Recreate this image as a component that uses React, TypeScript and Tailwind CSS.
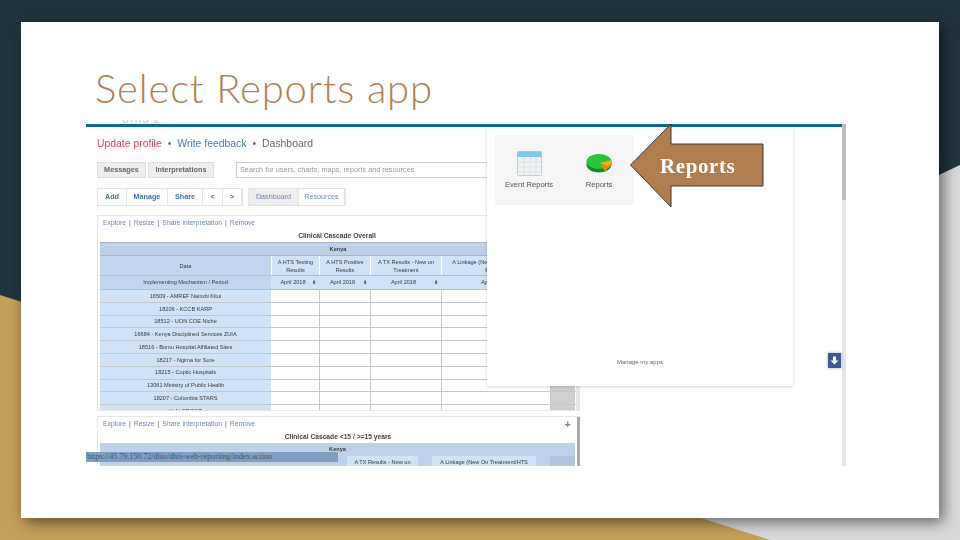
import React from "react";

const rows = [
  "16509 - AMREF Nairobi Kitui",
  "18206 - KCCB KARP",
  "18512 - UON COE Niche",
  "16684 - Kenya Disciplined Services ZUIA",
  "18516 - Bomu Hospital Affiliated Sites",
  "18217 - Ngima for Sure",
  "18215 - Coptic Hospitals",
  "13061 Ministry of Public Health",
  "18207 - Columbia STARS",
  "UoN CRISSP",
];

const cols = "grid grid-cols-[171px_48px_51px_71px_109px_25px]";

function Links() {
  return (
    <div className="h-[14px] flex items-center gap-[3px] pl-[3px] text-[6.8px] text-[#6f86b8]">
      <span>Explore</span><span className="text-[#666]">|</span>
      <span>Resize</span><span className="text-[#666]">|</span>
      <span>Share interpretation</span><span className="text-[#666]">|</span>
      <span>Remove</span>
    </div>
  );
}

function Period() {
  return (
    <div className="flex items-center justify-center relative h-full pr-[4px]">
      <span>April 2018</span>
      <span className="absolute right-[3px] text-[5px] text-[#444]">⬍</span>
    </div>
  );
}

function Tab({ label, w, blue, active }: { label: string; w: string; blue?: boolean; active?: boolean }) {
  return (
    <div className={`h-full flex items-center justify-center border-r border-[#e4e4e4] text-[7.2px] ${w} ${blue ? "font-bold text-[#4a6cb0]" : "text-[#6f86b8]"} ${active ? "bg-[#eeeeee]" : ""}`}>
      {label}
    </div>
  );
}

function CalendarIcon() {
  return (
    <svg width="25" height="25" viewBox="0 0 25 25">
      <rect x="0.5" y="0.5" width="24" height="24" rx="1" fill="#f0f3f4" stroke="#b4d3e8" />
      <rect x="0.5" y="0.5" width="24" height="5.5" fill="#84c4ee" />
      <path d="M1 11h23M1 16h23M1 21h23M7 6v18M13 6v18M19 6v18" stroke="#d6dde1" strokeWidth="0.8" />
    </svg>
  );
}

function PieIcon() {
  return (
    <svg width="26" height="19" viewBox="0 0 26 19">
      <ellipse cx="13" cy="10.5" rx="12.5" ry="8" fill="#138a2c" />
      <ellipse cx="13" cy="7.5" rx="12.5" ry="7.5" fill="#27c43f" />
      <path d="M14 9 L25.5 7 Q26 12 21 15 L19 18 Q17 13 14 9Z" fill="#e88a0c" />
      <path d="M14 9 L25 6.5 Q25.5 9 22 12 Z" fill="#fbb022" />
    </svg>
  );
}

export default function App() {
  return (
    <div className="relative w-[960px] h-[540px] overflow-hidden bg-[#22343f] pl-[21px] pt-[22px] font-['Liberation_Sans',sans-serif]">
      <svg className="absolute inset-0" width="960" height="540" viewBox="0 0 960 540">
        <polygon points="960,165 400,430 400,540 960,540" fill="#d9d9d9" />
        <polygon points="0,295 770,540 0,540" fill="#c5a05a" />
      </svg>

      <div className="relative w-[918px] h-[496px] bg-white shadow-[4px_4px_14px_rgba(0,0,0,0.55)] pl-[65px] pt-[98px]">
        <h1 className="absolute left-[74px] top-[41px] text-[40px] leading-[50px] font-light tracking-[0.85px] text-[#b07f52] font-['Lato',sans-serif]">
          Select Reports app
        </h1>

        {/* embedded screenshot */}
        <div className="relative w-[760px] h-[346px] overflow-hidden blur-[0.35px]">
          <div className="h-[4px] overflow-hidden pl-[36px] text-[10px] leading-[0px] font-bold tracking-[1px] text-[#d4d4d4]">DHIS 2</div>
          <div className="h-[3px] w-[757px] bg-[#0e6a93]" />

          <div className="pl-[11px]">
            <div className="mt-[9px] h-[16px] flex items-center gap-[6px] text-[10.4px] text-[#666]">
              <span className="text-[#e0405a]">Update profile</span>
              <span>•</span>
              <span className="text-[#4a76c0]">Write feedback</span>
              <span>•</span>
              <span>Dashboard</span>
            </div>

            <div className="mt-[10px] h-[16px] flex items-center text-[7.3px]">
              <div className="h-full w-[49px] flex items-center justify-center bg-[#eeeeee] border border-[#dddddd] font-bold text-[#666]">Messages</div>
              <div className="ml-[2px] h-full w-[66px] flex items-center justify-center bg-[#eeeeee] border border-[#dddddd] font-bold text-[#666]">Interpretations</div>
              <div className="ml-[22px] h-full w-[260px] flex items-center pl-[3px] border border-[#cccccc] text-[#999]">Search for users, charts, maps, reports and resources</div>
            </div>

            <div className="mt-[10px] h-[18px] flex">
              <div className="flex border border-[#e4e4e4] h-full">
                <Tab label="Add" w="w-[29px]" blue />
                <Tab label="Manage" w="w-[41px]" blue />
                <Tab label="Share" w="w-[35px]" blue />
                <Tab label="<" w="w-[20px]" blue />
                <Tab label=">" w="w-[19px]" blue />
              </div>
              <div className="ml-[5px] flex border border-[#e4e4e4] h-full">
                <Tab label="Dashboard" w="w-[50px]" active />
                <Tab label="Resources" w="w-[46px]" />
              </div>
            </div>

            {/* panel 1 */}
            <div className="mt-[9px] w-[483px] h-[196px] border border-[#e6e6e6] border-r-[4px] pl-[2px] overflow-hidden">
              <Links />
              <div className="h-[12px] pr-[2px] flex items-center justify-center text-[6.7px] font-bold text-[#444]">Clinical Cascade Overall</div>
              <div className="text-[5.6px] text-[#3a3a3a]">
                <div className="h-[14px] bg-[#bed1e8] border-y border-[#a9b6c6] flex items-center justify-center font-bold">Kenya</div>
                <div className={`${cols} h-[20px] bg-[#d0e2f6] border-b border-[#b5bfca] text-center leading-[8px]`}>
                  <div className="bg-[#c3d5ea] flex items-center justify-center">Data</div>
                  <div className="flex items-center justify-center border-l border-white">A HTS Testing Results</div>
                  <div className="flex items-center justify-center border-l border-white">A HTS Positive Results</div>
                  <div className="flex items-center justify-center border-l border-white">A TX Results - New on Treatment</div>
                  <div className="flex items-center justify-center border-l border-white">A Linkage (New On Treatment/HTS Positive)</div>
                  <div className="bg-[#bed1e8]" />
                </div>
                <div className={`${cols} h-[14px] bg-[#d0e2f6] border-b border-[#b5bfca] text-center`}>
                  <div className="bg-[#c3d5ea] flex items-center justify-center">Implementing Mechanism / Period</div>
                  <Period />
                  <Period />
                  <Period />
                  <Period />
                  <div className="bg-[#bed1e8]" />
                </div>
                {rows.map((r) => (
                  <div key={r} className={`${cols} h-[12.8px] border-b border-[#c4c8cc]`}>
                    <div className="bg-[#d0e2f6] flex items-center justify-center">{r}</div>
                    <div />
                    <div className="border-l border-[#c4c8cc]" />
                    <div className="border-l border-[#c4c8cc]" />
                    <div className="border-l border-[#c4c8cc]" />
                    <div className="bg-[#cfcfcf] border-l border-[#c4c8cc]" />
                  </div>
                ))}
              </div>
            </div>

            {/* panel 2 */}
            <div className="mt-[5px] relative w-[483px] h-[60px] border-l border-t border-[#e6e6e6] pl-[2px] overflow-hidden">
              <Links />
              <div className="h-[12px] pr-[4px] flex items-center justify-center text-[6.7px] font-bold text-[#444]">Clinical Cascade &lt;15 / &gt;=15 years</div>
              <div className="w-[475px] text-[5.6px] text-[#3a3a3a]">
                <div className="h-[13px] bg-[#bed1e8] flex items-center justify-center font-bold">Kenya</div>
                <div className="h-[12px] bg-[#bed1e8] flex pl-[247px]">
                  <div className="w-[71px] bg-[#d0e2f6] text-center leading-[12px]">A TX Results - New on</div>
                  <div className="ml-[14px] w-[104px] bg-[#d0e2f6] text-center leading-[12px]">A Linkage (New On Treatment/HTS</div>
                  <div className="ml-[14px] w-[25px] bg-[#b4c4d8]" />
                </div>
              </div>
              <div className="absolute right-[9px] top-[1px] text-[11px] font-bold leading-[12px] text-[#888]">+</div>
              <div className="absolute right-0 top-0 w-[3px] h-full bg-[#aaaaaa]" />
            </div>
          </div>

          {/* status bar */}
          <div className="absolute left-0 bottom-[4px] w-[252px] h-[10px] bg-[#7f9fbc] text-[8px] leading-[10px] pl-[1px] text-[#3d5a78] font-['Liberation_Serif',serif]">
            https://45.79.150.72/dhis/dhis-web-reporting/index.action
          </div>

          {/* page scrollbar */}
          <div className="absolute left-[756px] top-[4px] w-[4px] h-[342px] bg-[#e6e6e6]">
            <div className="w-full h-[76px] bg-[#bdbdbd]" />
          </div>

          {/* app launcher popup */}
          <div className="absolute left-[401px] top-[7px] w-[306px] h-[259px] bg-white shadow-[0_1px_3px_rgba(0,0,0,0.18)] p-[8px]">
            <div className="w-[139px] h-[70px] bg-[#f5f5f5] flex gap-[30px] pl-[9px] pt-[16px] text-[7.6px] text-[#555]">
              <div className="w-[50px] flex flex-col items-center gap-[3px]">
                <CalendarIcon />
                <span className="whitespace-nowrap">Event Reports</span>
              </div>
              <div className="w-[30px] flex flex-col items-center gap-[6px] pt-[3px]">
                <PieIcon />
                <span>Reports</span>
              </div>
            </div>
            <div className="absolute left-0 right-0 top-[231px] text-center text-[6px] text-[#666]">Manage my apps</div>
          </div>

          {/* scroll-to-bottom button */}
          <div className="absolute left-[742px] top-[233px] w-[13px] h-[15px] bg-[#3c5a94] flex items-center justify-center shadow-[0_0_3px_rgba(60,90,150,0.5)]">
            <svg width="9" height="9" viewBox="0 0 9 9"><path d="M3 0.5h3v4h2.5L4.5 8.5.5 4.5H3z" fill="#fff" /></svg>
          </div>
        </div>

        {/* callout arrow */}
        <div className="absolute left-[608px] top-[101px] w-[145px] h-[85px]">
          <svg className="absolute inset-0" width="145" height="85" viewBox="0 0 145 85">
            <polygon points="1.5,42 42,1 42,21 134,21 134,63 42,63 42,84 " fill="#b07d4f" stroke="#333a40" strokeWidth="1" />
          </svg>
          <span className="absolute left-[31px] top-[28px] text-[21px] leading-[30px] font-bold text-white tracking-[0.6px] font-['Liberation_Serif',serif]">Reports</span>
        </div>
      </div>
    </div>
  );
}
